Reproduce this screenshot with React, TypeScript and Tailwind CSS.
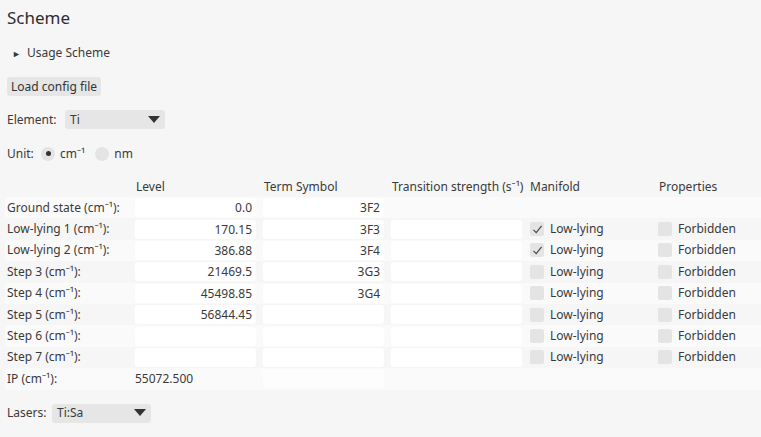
import React from "react"

type Row = {
  label: string
  level: string
  term: string
  trans: boolean
  manifold: "none" | "on" | "off"
}

const rows: Row[] = [
  { label: "Ground state (cm⁻¹):", level: "0.0", term: "3F2", trans: false, manifold: "none" },
  { label: "Low-lying 1 (cm⁻¹):", level: "170.15", term: "3F3", trans: true, manifold: "on" },
  { label: "Low-lying 2 (cm⁻¹):", level: "386.88", term: "3F4", trans: true, manifold: "on" },
  { label: "Step 3 (cm⁻¹):", level: "21469.5", term: "3G3", trans: true, manifold: "off" },
  { label: "Step 4 (cm⁻¹):", level: "45498.85", term: "3G4", trans: true, manifold: "off" },
  { label: "Step 5 (cm⁻¹):", level: "56844.45", term: "", trans: true, manifold: "off" },
  { label: "Step 6 (cm⁻¹):", level: "", term: "", trans: true, manifold: "off" },
  { label: "Step 7 (cm⁻¹):", level: "", term: "", trans: true, manifold: "off" },
]

function Check({ checked }: { checked?: boolean }) {
  return (
    <span className="w-[14px] h-[14px] rounded-[2px] bg-[#e4e4e4] flex items-center justify-center shrink-0">
      {checked && (
        <svg width="11" height="11" viewBox="0 0 11 11" fill="none">
          <path d="M1.5 5.8 L4.2 8.6 L9.6 1.8" stroke="#444" strokeWidth="1.1" />
        </svg>
      )}
    </span>
  )
}

function Caret() {
  return (
    <svg width="12" height="8" viewBox="0 0 12 8">
      <path d="M0 0 H12 L6 7 Z" fill="#333" />
    </svg>
  )
}

function Box({ value, show = true }: { value: string; show?: boolean }) {
  return (
    <div
      className={
        "h-[19px] rounded-[3px] pr-[4px] text-right leading-[19px] " + (show ? "bg-white" : "")
      }
    >
      {value}
    </div>
  )
}

export default function App() {
  const grid = "grid grid-cols-[123px_121px_121px_131px_121px_1fr] gap-x-[7px] items-center whitespace-nowrap"
  return (
    <div
      className="w-[761px] h-[437px] bg-[#f6f6f6] text-[#3a3a3a] text-[12px] overflow-hidden"
      style={{ fontFamily: '"Noto Sans", "Open Sans", sans-serif' }}
    >
      <div className="px-[7px] pt-[5px] h-[28px] text-[17px] leading-[26px] text-[#2e2e2e]">Scheme</div>

      <div className="mt-[16px] pl-[12px] flex items-center gap-[6px] h-[18px]">
        <span className="text-[9px] leading-none">►</span>
        <span>Usage Scheme</span>
      </div>

      <div className="mt-[15px] px-[7px]">
        <button className="h-[19px] px-[4px] bg-[#e6e6e6] rounded-[3px] leading-[19px] text-[#333]">
          Load config file
        </button>
      </div>

      <div className="mt-[14px] px-[7px] flex items-center h-[19px]">
        <span className="w-[58px]">Element:</span>
        <div className="w-[100px] h-[19px] bg-[#e6e6e6] rounded-[3px] flex items-center justify-between pl-[5px] pr-[5px]">
          <span>Ti</span>
          <Caret />
        </div>
      </div>

      <div className="mt-[15px] px-[7px] flex items-center h-[19px]">
        <span className="w-[34px]">Unit:</span>
        <span className="w-[14px] h-[14px] rounded-full bg-[#e4e4e4] flex items-center justify-center">
          <span className="w-[5px] h-[5px] rounded-full bg-[#333]" />
        </span>
        <span className="ml-[5px]">cm⁻¹</span>
        <span className="ml-[10px] w-[14px] h-[14px] rounded-full bg-[#e4e4e4]" />
        <span className="ml-[5px]">nm</span>
      </div>

      <div className={grid + " mt-[14px] pl-[5px] h-[20px]"}>
        <span />
        <span className="pl-[1px]">Level</span>
        <span className="pl-[1px]">Term Symbol</span>
        <span className="pl-[1px]">Transition strength (s⁻¹)</span>
        <span className="pl-[1px]">Manifold</span>
        <span className="pl-[2px]">Properties</span>
      </div>

      <div className="ml-[5px] flex flex-col">
        {rows.map((r, i) => (
          <div
            key={r.label}
            className={grid + " h-[21.4px] rounded-l-[3px] " + (i % 2 === 0 ? "bg-[#fafafa]" : "")}
          >
            <span className="pl-[2px]">{r.label}</span>
            <Box value={r.level} />
            <Box value={r.term} />
            <Box value="" show={r.trans} />
            <div className="flex items-center gap-[6px] pl-[1px]">
              {r.manifold !== "none" && (
                <>
                  <Check checked={r.manifold === "on"} />
                  <span>Low-lying</span>
                </>
              )}
            </div>
            <div className="flex items-center gap-[6px] pl-[1px]">
              {r.manifold !== "none" && (
                <>
                  <Check />
                  <span>Forbidden</span>
                </>
              )}
            </div>
          </div>
        ))}
        <div className={grid + " h-[21.4px] rounded-l-[3px] bg-[#fafafa]"}>
          <span className="pl-[2px]">IP (cm⁻¹):</span>
          <span>55072.500</span>
          <div className="h-[19px] rounded-[3px] bg-[#fdfdfd]" />
          <span />
          <span />
          <span />
        </div>
      </div>

      <div className="mt-[14px] px-[7px] flex items-center h-[19px]">
        <span className="w-[45px]">Lasers:</span>
        <div className="w-[99px] h-[19px] bg-[#e6e6e6] rounded-[3px] flex items-center justify-between pl-[5px] pr-[5px]">
          <span>Ti:Sa</span>
          <Caret />
        </div>
      </div>
    </div>
  )
}
